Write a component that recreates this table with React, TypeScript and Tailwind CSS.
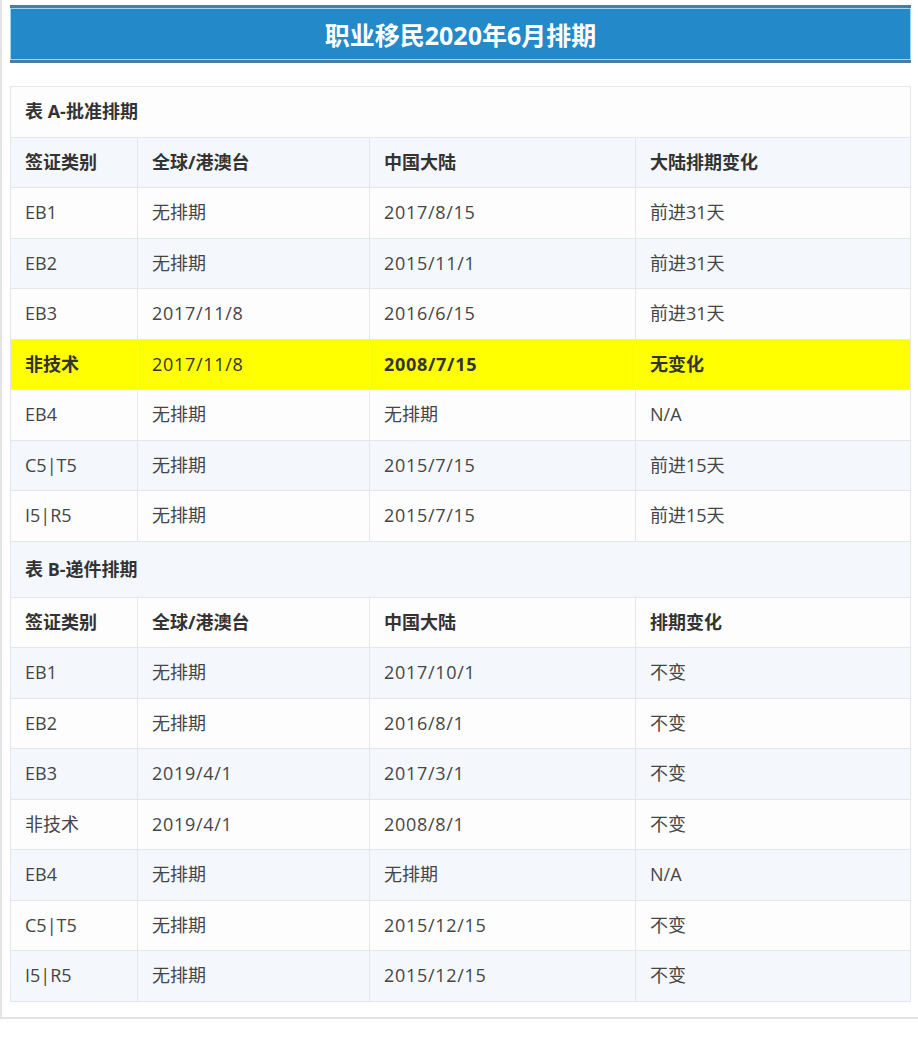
import React from 'react';

type Row = { type: string; total: string; china: string; change: string; hl?: boolean };

const tableA: Row[] = [
  { type: 'EB1', total: '无排期', china: '2017/8/15', change: '前进31天' },
  { type: 'EB2', total: '无排期', china: '2015/11/1', change: '前进31天' },
  { type: 'EB3', total: '2017/11/8', china: '2016/6/15', change: '前进31天' },
  { type: '非技术', total: '2017/11/8', china: '2008/7/15', change: '无变化', hl: true },
  { type: 'EB4', total: '无排期', china: '无排期', change: 'N/A' },
  { type: 'C5|T5', total: '无排期', china: '2015/7/15', change: '前进15天' },
  { type: 'I5|R5', total: '无排期', china: '2015/7/15', change: '前进15天' },
];

const tableB: Row[] = [
  { type: 'EB1', total: '无排期', china: '2017/10/1', change: '不变' },
  { type: 'EB2', total: '无排期', china: '2016/8/1', change: '不变' },
  { type: 'EB3', total: '2019/4/1', china: '2017/3/1', change: '不变' },
  { type: '非技术', total: '2019/4/1', china: '2008/8/1', change: '不变' },
  { type: 'EB4', total: '无排期', china: '无排期', change: 'N/A' },
  { type: 'C5|T5', total: '无排期', china: '2015/12/15', change: '不变' },
  { type: 'I5|R5', total: '无排期', china: '2015/12/15', change: '不变' },
];

const td = 'border border-[#e3e6ea] px-[14px] h-[50.5px] align-middle';

const bgFor = (i: number) => (i % 2 === 0 ? 'bg-[#fdfdfd]' : 'bg-[#f4f8fd]');

// dates render a touch wider in the original
const isDate = (s: string) => /^[0-9/]+$/.test(s);
const Val = ({ v }: { v: string }) => (isDate(v) ? <span className="tracking-[0.7px]">{v}</span> : <>{v}</>);

export default function App() {
  // one running index so the stripes carry on from table A into table B
  let idx = 0;

  const caption = (text: string, tall?: boolean) => {
    const i = idx++;
    return (
      <tr key={text} className={bgFor(i)}>
        <td colSpan={4} className={`${td} font-bold text-[#333] ${tall ? 'h-[56px]' : ''}`}>
          {text}
        </td>
      </tr>
    );
  };

  const header = (last: string) => {
    const i = idx++;
    return (
      <tr key={'h' + last} className={`${bgFor(i)} font-bold text-[#333]`}>
        <td className={td}>签证类别</td>
        <td className={td}>全球/港澳台</td>
        <td className={td}>中国大陆</td>
        <td className={td}>{last}</td>
      </tr>
    );
  };

  const body = (rows: Row[], key: string) =>
    rows.map((r) => {
      const i = idx++;
      if (r.hl) {
        return (
          <tr key={key + r.type} className="bg-[#ffff00] text-[#333]">
            <td className={`${td} font-bold`}>{r.type}</td>
            <td className={td}><Val v={r.total} /></td>
            <td className={`${td} font-bold`}><Val v={r.china} /></td>
            <td className={`${td} font-bold`}>{r.change}</td>
          </tr>
        );
      }
      return (
        <tr key={key + r.type} className={`${bgFor(i)} text-[#454545]`}>
          <td className={td}>{r.type}</td>
          <td className={td}><Val v={r.total} /></td>
          <td className={td}><Val v={r.china} /></td>
          <td className={td}>{r.change}</td>
        </tr>
      );
    });

  return (
    <div className="min-h-[1045px] bg-white" style={{ fontFamily: '"Open Sans", "Noto Sans CJK SC", sans-serif' }}>
      <div className="border-l-2 border-b-2 border-[#e4e4e4] pl-[8px] pt-[5px] pb-[15px]">
        <div className="w-[901px] border-t-[3px] border-b-[3px] border-[#4e7b9e]">
          <div className="h-[52px] pt-[3px] border border-[#9fd5ee] bg-[#2389c8] flex items-center justify-center text-white text-[25px] font-bold">
            职业移民2020年6月排期
          </div>
        </div>

        <table className="mt-[23px] w-[900px] border-collapse border border-[#e0e3e7] text-[18px] table-fixed">
          <colgroup>
            <col className="w-[127px]" />
            <col className="w-[232px]" />
            <col className="w-[266px]" />
            <col className="w-[275px]" />
          </colgroup>
          <tbody>
            {caption('表 A-批准排期')}
            {header('大陆排期变化')}
            {body(tableA, 'a')}
            {caption('表 B-递件排期', true)}
            {header('排期变化')}
            {body(tableB, 'b')}
          </tbody>
        </table>
      </div>
    </div>
  );
}
